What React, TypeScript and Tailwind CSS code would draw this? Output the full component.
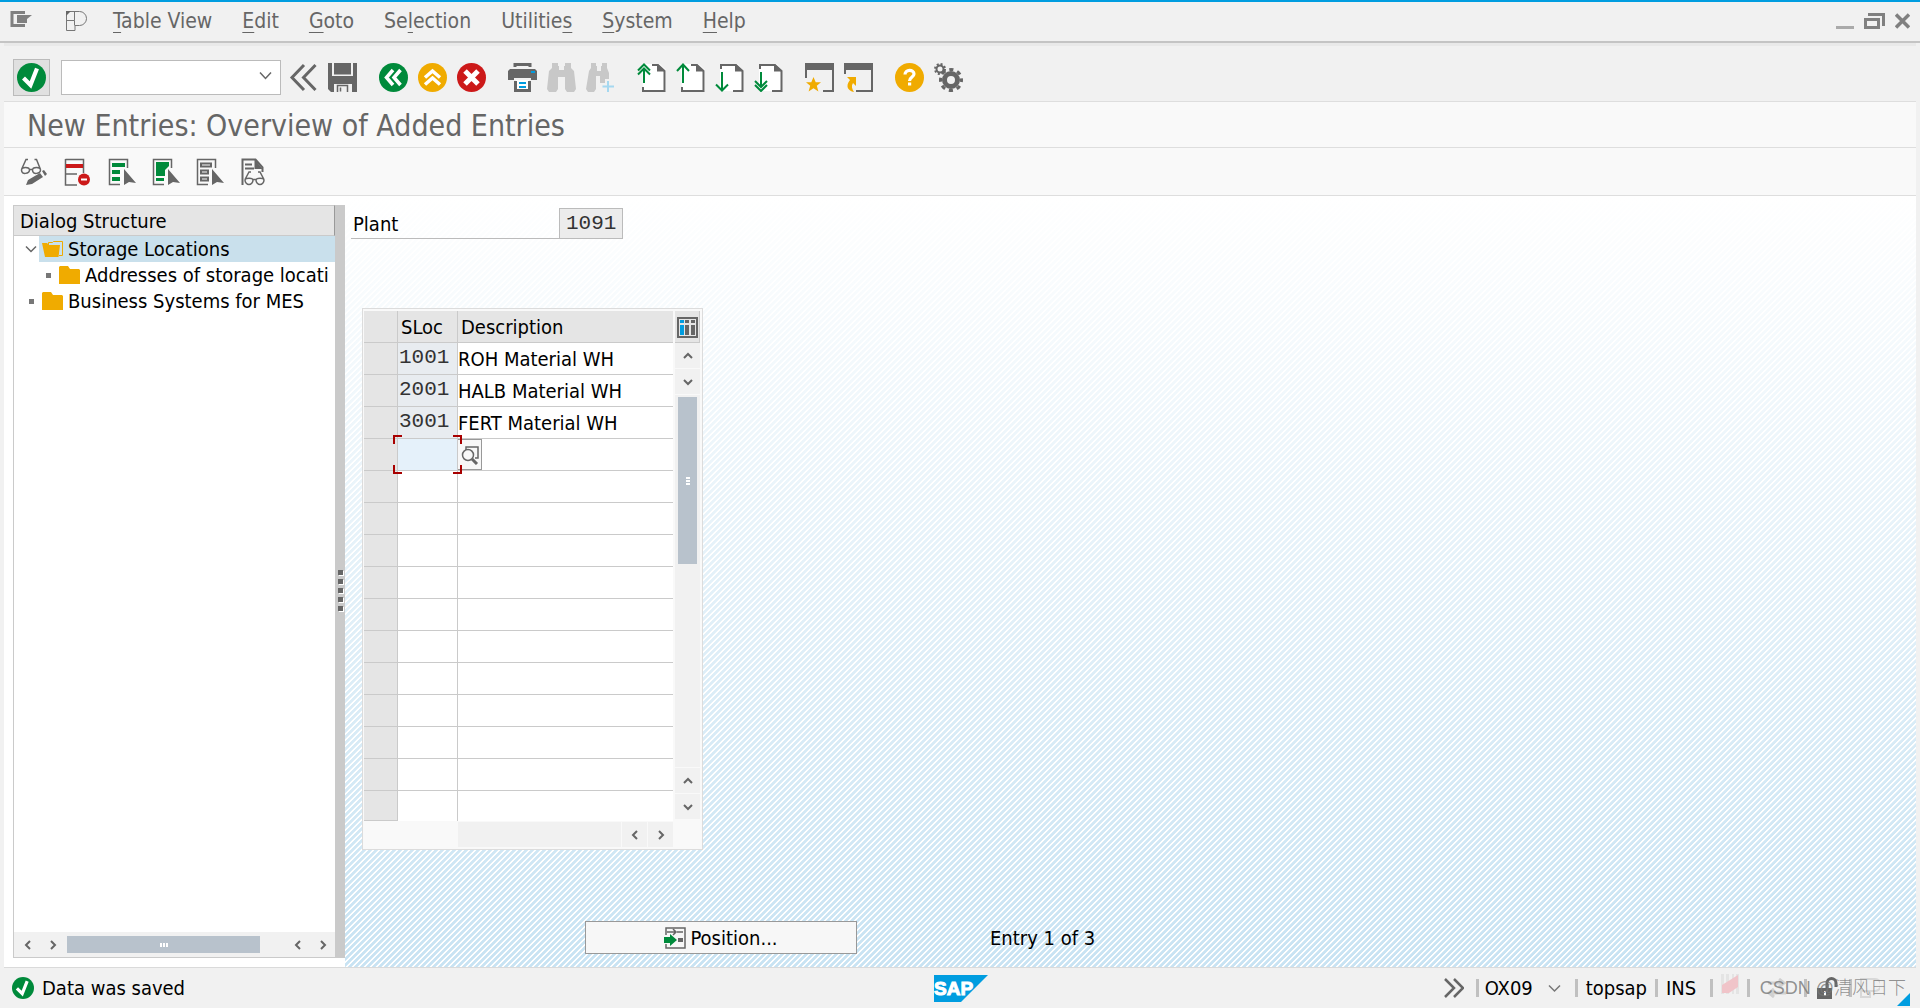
import type { ReactNode } from 'react';
import clsx from 'clsx';

const menus = [
  ['', 'T', 'able View'],
  ['', 'E', 'dit'],
  ['', 'G', 'oto'],
  ['Se', 'l', 'ection'],
  ['Utilitie', 's', ''],
  ['', 'S', 'ystem'],
  ['', 'H', 'elp'],
];

const rows = [
  { sloc: '1001', description: 'ROH Material WH' },
  { sloc: '2001', description: 'HALB Material WH' },
  { sloc: '3001', description: 'FERT Material WH' },
  ...Array.from({ length: 12 }, () => ({ sloc: '', description: '' })),
];

function Svg({ size = 29, className, children }: { size?: number; className?: string; children: ReactNode }) {
  return (
    <svg
      width={size}
      height={size}
      viewBox={`0 0 ${size} ${size}`}
      fill="none"
      className={clsx('block shrink-0', className)}
      aria-hidden="true"
    >
      {children}
    </svg>
  );
}

function IconButton({ label, children }: { label: string; children: ReactNode }) {
  return (
    <button type="button" aria-label={label} className="block shrink-0">
      {children}
    </button>
  );
}

function CheckIcon({ size = 29 }: { size?: number }) {
  return (
    <svg width={size} height={size} viewBox="0 0 29 29" fill="none" className="block shrink-0" aria-hidden="true">
      <circle cx="14.5" cy="14.5" r="14.5" fill="#008a3b" />
      <path d="M6.500 15l7 7L20 5.500" stroke="#fff" strokeWidth="4.200" />
    </svg>
  );
}

function PageIcon({ up, double }: { up?: boolean; double?: boolean }) {
  return (
    <Svg>
      <path d={up ? 'M5 1h18l6 6v21H6z' : 'M5 1h18l5 6v21H5z'} fill="#fff" />
      <path d="M20 1l8 7.500h-8z" fill="#666" />
      {up ? (
        <path d="M15 2h6l6.500 6v20H6v-4" stroke="#666" strokeWidth="2" />
      ) : (
        <path d="M6 6V2h15l6.500 6v20H18" stroke="#666" strokeWidth="2" />
      )}
      {up ? (
        <path
          d={double ? 'M7 20V6M1 11.500l6-6 6 6M1 7.500l6-6 6 6' : 'M7 20V2M1 8l6-6.500L13 8'}
          stroke="#008a3b"
          strokeWidth="2"
        />
      ) : (
        <path
          d={double ? 'M7 9v14M1 18l6 6 6-6M1 22l6 6 6-6' : 'M7 9v18M1 21.500l6 6 6-6'}
          stroke="#008a3b"
          strokeWidth="2"
        />
      )}
    </Svg>
  );
}

function ChevronIcon({ dir }: { dir: 'up' | 'down' | 'left' | 'right' }) {
  const paths = {
    up: 'M2 8l4-4 4 4',
    down: 'M2 4l4 4 4-4',
    left: 'M8 2L4 6l4 4',
    right: 'M4 2l4 4-4 4',
  };
  return (
    <Svg size={12}>
      <path d={paths[dir]} stroke="#666" strokeWidth="2" />
    </Svg>
  );
}

function ScrollButton({ dir }: { dir: 'up' | 'down' | 'left' | 'right' }) {
  return (
    <button
      type="button"
      aria-label={`Scroll ${dir}`}
      className="flex size-[25px] shrink-0 items-center justify-center bg-[#f1f1f1]"
    >
      <ChevronIcon dir={dir} />
    </button>
  );
}

function Grip({ vertical }: { vertical?: boolean }) {
  return (
    <span className={clsx('flex gap-px', vertical && 'flex-col')}>
      {[0, 1, 2].map((i) => (
        <span key={i} className={clsx('bg-white', vertical ? 'h-0.5 w-1' : 'h-1 w-0.5')} />
      ))}
    </span>
  );
}

function MenuBar() {
  return (
    <header className="flex h-[41px] items-center border-b-2 border-[#c4c4c4] pr-2.5 pb-0.5 pl-2.5">
      <IconButton label="Window menu">
        <svg width="23" height="18" viewBox="0 0 23 18" className="mb-1 block" aria-hidden="true">
          <path d="M15 2.500H2v13h13" fill="none" stroke="#808080" strokeWidth="3" />
          <path d="M7 5h15l-5 4v4H7z" fill="#808080" />
        </svg>
      </IconButton>
      <svg width="24" height="22" viewBox="0 0 24 22" fill="none" className="ml-8 block" aria-hidden="true">
        <path
          d="M1.500 1.500h13a7 7 0 0 1 0 14H10v5H1.500zM9.500 1.500v9H1.500M9.500 10.500v5"
          stroke="#777"
        />
        <path d="M1 1h5L1 6z" fill="#666" />
      </svg>
      <nav className="ml-6 flex gap-[30px] text-[21px] text-[#666]">
        {menus.map(([before, key, after]) => (
          <button key={before + key + after} type="button" className="leading-7">
            {before}
            <span className="underline decoration-1 underline-offset-4">{key}</span>
            {after}
          </button>
        ))}
      </nav>
      <div className="ml-auto flex items-center gap-2.5">
        <IconButton label="Minimize">
          <svg width="18" height="18" viewBox="0 0 18 18" className="block" aria-hidden="true">
            <path d="M0 14h18v3H0z" fill="#aaa" />
          </svg>
        </IconButton>
        <IconButton label="Restore">
          <svg width="21" height="18" viewBox="0 0 21 18" fill="none" stroke="#808080" strokeWidth="3" className="block" aria-hidden="true">
            <path d="M1.500 7.500h13v8h-13zM4 2.500h15.500V14" />
          </svg>
        </IconButton>
        <IconButton label="Close">
          <svg width="15" height="16" viewBox="0 0 15 16" stroke="#808080" strokeWidth="3.500" className="block" aria-hidden="true">
            <path d="M1 1.500l13 13M14 1.500l-13 13" />
          </svg>
        </IconButton>
      </div>
    </header>
  );
}

function StandardToolbar() {
  return (
    <div className="mx-1 flex h-[58px] items-center border-t-3 border-[#e9e9e9] pt-2.5 pb-0.5 pl-[9px]">
      <button
        type="button"
        aria-label="Enter"
        className="flex size-[37px] items-center justify-center border border-[#bbb] bg-[#e0e0e0]"
      >
        <CheckIcon />
      </button>
      <div className="ml-[11px] flex h-[35px] w-[220px] items-center border border-[#bbb] bg-white pr-2">
        <input aria-label="Command" className="h-full min-w-0 flex-1 px-1 text-xl outline-none" />
        <IconButton label="Command history">
          <Svg size={13} className="mb-1">
            <path d="M1 3.500l5.500 6 5.500-6" stroke="#666" strokeWidth="1.500" />
          </Svg>
        </IconButton>
      </div>
      <div className="ml-2 flex items-center gap-2.5">
        <IconButton label="Hide command field">
          <Svg>
            <path d="M15 2L3 14.500 15 27M26.500 2l-12 12.500 12 12.500" stroke="#666" strokeWidth="3" />
          </Svg>
        </IconButton>
        <IconButton label="Save">
          <Svg>
            <path d="M0 0h4v13h21V0h4v29h-5v-8.500H6V29H3l-3-3z" fill="#666" />
            <path d="M6 0h17v11.500H6z" fill="#666" />
            <path d="M9.500 29v-6.500h10V29M12.500 24.500v4" stroke="#666" strokeWidth="1.500" />
            <path d="M4 13h21v8H4z" fill="#666" />
          </Svg>
        </IconButton>
      </div>
      <div className="ml-[22px] flex gap-2.5">
        <IconButton label="Back">
          <Svg>
            <circle cx="14.5" cy="14.500" r="14.500" fill="#008a3b" />
            <path d="M14 7l-6.500 7.500L14 22M21.500 7L15 14.500l6.500 7.500" stroke="#fff" strokeWidth="3.500" />
          </Svg>
        </IconButton>
        <IconButton label="Exit">
          <Svg>
            <circle cx="14.500" cy="14.500" r="14.500" fill="#f0ab00" />
            <path d="M7 14.500L14.500 8l7.500 6.500M7 21.500l7.500-6.500 7.500 6.500" stroke="#fff" strokeWidth="3.500" />
          </Svg>
        </IconButton>
        <IconButton label="Cancel">
          <Svg>
            <circle cx="14.500" cy="14.500" r="14.500" fill="#cc1919" />
            <path d="M8 8l13 13M21 8L8 21" stroke="#fff" strokeWidth="5" />
          </Svg>
        </IconButton>
      </div>
      <div className="ml-[22px] flex gap-2.5">
        <IconButton label="Print">
          <Svg>
            <path d="M7 4V1.500h15V4" stroke="#666" strokeWidth="3" />
            <path d="M2 6h25l2 2v9h-6v-2H6v2H0V8z" fill="#666" />
            <path d="M23 8h4v2h-4z" fill="#009de0" />
            <path d="M8 17h13v9H8z" fill="#fff" />
            <path d="M7.500 18v9.500h14V18" stroke="#666" strokeWidth="3" />
            <path d="M11 20h7M11 24h7" stroke="#009de0" strokeWidth="2" />
          </Svg>
        </IconButton>
        <IconButton label="Find">
          <Svg>
            <path
              d="M5 0h6v3h1v4h5V3h1V0h6v5l3 3 2 18-2 3h-7l-2-3V14h-7v12l-2 3H2l-2-3L2 8l3-3z"
              fill="#c8c8c8"
            />
          </Svg>
        </IconButton>
        <IconButton label="Find next">
          <Svg>
            <path
              d="M5 0h5v3h1v5h4V3h1V0h5v5l2 5v6h-4v4h-5v-7h-4v13l-2 3H2l-2-3L3 8l2-3z"
              fill="#c8c8c8"
            />
            <path d="M22 18v11M16.500 23.500H28" stroke="#a5d8f0" strokeWidth="2" />
          </Svg>
        </IconButton>
      </div>
      <div className="ml-[22px] flex gap-2.5">
        <IconButton label="First page">
          <PageIcon up double />
        </IconButton>
        <IconButton label="Previous page">
          <PageIcon up />
        </IconButton>
        <IconButton label="Next page">
          <PageIcon />
        </IconButton>
        <IconButton label="Last page">
          <PageIcon double />
        </IconButton>
      </div>
      <div className="ml-[22px] flex gap-2.5">
        <IconButton label="Create session">
          <Svg>
            <path d="M0 0h29v29H18v-2h9V7H2v8H0z" fill="#666" />
            <path d="M8.500 14l2.200 5.200H16l-4.200 3.600 1.600 5.700-4.900-3.300-4.900 3.300 1.600-5.700L1 19.200h5.300z" fill="#f0ab00" />
          </Svg>
        </IconButton>
        <IconButton label="Generate shortcut">
          <Svg>
            <path d="M0 0h29v29H12v-2h15V7H2v4H0z" fill="#666" />
            <path d="M3 14h9v9l-3-3c-2 3-1 6 1 9-6-1-9-6-4-12z" fill="#f0ab00" />
          </Svg>
        </IconButton>
      </div>
      <div className="ml-[22px] flex gap-2.5">
        <IconButton label="Help">
          <Svg>
            <circle cx="14.500" cy="14.500" r="14.500" fill="#f0ab00" />
            <path d="M10 11.500c0-5.500 9-5.500 9-.5 0 3-4.500 3-4.500 7" stroke="#fff" strokeWidth="3.200" />
            <path d="M13 19.500h3.200v3H13z" fill="#fff" />
          </Svg>
        </IconButton>
        <IconButton label="Customize local layout">
          <Svg>
            <circle cx="17" cy="17" r="6.500" stroke="#666" strokeWidth="5" />
            <circle cx="17" cy="17" r="10.500" stroke="#666" strokeWidth="3" strokeDasharray="4.200 4.047" strokeDashoffset="2.100" />
            <circle cx="6" cy="6" r="3.500" stroke="#666" strokeWidth="2" />
            <circle cx="6" cy="6" r="5" stroke="#666" strokeWidth="2" strokeDasharray="2 1.927" />
          </Svg>
        </IconButton>
      </div>
    </div>
  );
}

function Pointer() {
  return <path d="M16 11l12 14-7-1-5 3z" fill="#666" />;
}

function FunctionBar() {
  return (
    <div className="mx-1 flex h-12 items-center gap-4 border-t border-[#dedede] bg-[#f9f9f9] px-4">
      <IconButton label="Display / change">
        <Svg size={28}>
          <path
            d="M1.500 12c0-3.500 8-3.500 8 0s-8 5.500-8 0zM12.500 12c0-3.500 8-3.500 8 0s-8 5.500-8 0zM9.500 11.500h3M1.500 11.500L6 1.500h2M20.500 11.500L16.500 1.500h-2"
            stroke="#666"
            strokeWidth="1.500"
          />
          <path d="M8 22l12-7 3 4-11 7-6 1zM22 13l2-1 3 4-2 2z" fill="#666" />
        </Svg>
      </IconButton>
      <IconButton label="Delete">
        <Svg size={28}>
          <path d="M1.500 1.500h18V15M1.500 1v26H13M2 16h11" stroke="#666" strokeWidth="1.500" />
          <path d="M2 6h17v4H2z" fill="#cc1919" />
          <circle cx="20" cy="21.500" r="6" fill="#cc1919" />
          <path d="M17 21.500h6" stroke="#fff" strokeWidth="2" />
        </Svg>
      </IconButton>
      <IconButton label="Select all">
        <Svg size={28}>
          <path d="M12 26.500H1.500v-25h18V10" stroke="#666" strokeWidth="1.500" />
          <path d="M4 5h13v4H4zM4 12h8v4H4zM4 19h8v4H4z" fill="#008a3b" />
          <Pointer />
        </Svg>
      </IconButton>
      <IconButton label="Select block">
        <Svg size={28}>
          <path d="M12 26.500H1.500v-25h18V10" stroke="#666" strokeWidth="1.500" />
          <path d="M4 4h13v4l-4 4v6H4zM4 20h8v3H4z" fill="#008a3b" />
          <Pointer />
        </Svg>
      </IconButton>
      <IconButton label="Deselect all">
        <Svg size={28}>
          <path d="M12 26.500H1.500v-25h18V10" stroke="#666" strokeWidth="1.500" />
          <path d="M5 5.500h10v3H5zM5 12.500h7v3H5zM5 19.500h7v3H5z" stroke="#666" strokeWidth="2" />
          <Pointer />
        </Svg>
      </IconButton>
      <IconButton label="Print preview">
        <Svg size={28}>
          <path d="M2.500 27V1.500h13l7 8V14M5 6.500h7M5 10.500h9" stroke="#666" strokeWidth="2" />
          <path d="M14.500 1l8 10h-8z" fill="#666" />
          <path
            d="M5 22c0-2.500 8-2.500 8 0s-2 4.500-4 4.500-4-2-4-4.500zM16 22c0-2.500 8-2.500 8 0s-2 4.500-4 4.500-4-2-4-4.500zM13 21.500h3M5 21.500l4-7.500h2M24 21.500L20 14h-2"
            stroke="#666"
            strokeWidth="1.500"
          />
        </Svg>
      </IconButton>
    </div>
  );
}

function Folder({ open }: { open?: boolean }) {
  return (
    <svg width="21" height="18" viewBox="0 0 21 18" className="mr-[5px] block shrink-0" aria-hidden="true">
      {open ? (
        <>
          <path d="M6.500 5V2.500h4l1-1h9v14H17" fill="none" stroke="#f0ab00" />
          <path d="M0 3h5l2 2h11l-1.500 12H3z" fill="#f0ab00" />
        </>
      ) : (
        <path d="M0 1l1-1h8l2 3h9l1 1v14H0z" fill="#f0ab00" />
      )}
    </svg>
  );
}

function Bullet() {
  return <span className="size-[5px] shrink-0 bg-[#777]" />;
}

function DialogStructure() {
  return (
    <aside className="mt-[9px] mb-[9px] ml-[9px] flex w-[332px] shrink-0 border-b border-[#cacaca]">
      <div className="flex min-w-0 flex-1 flex-col border-l border-[#cacaca]">
        <h2 className="h-[31px] border-y border-r border-y-[#cacaca] border-r-[#999] bg-[#e5e5e5] pl-1.5 text-xl leading-[30px]">
          Dialog Structure
        </h2>
        <ul className="flex-1 overflow-hidden text-xl leading-[26px] whitespace-nowrap">
          <li className="flex items-center pl-[11px]">
            <button type="button" aria-label="Collapse" className="mr-0.5">
              <Svg size={12}>
                <path d="M1 3.500l5 5 5-5" stroke="#666" strokeWidth="1.500" />
              </Svg>
            </button>
            <a href="#storage" className="flex flex-1 items-center bg-[#c9e0ec] pl-[3px]">
              <Folder open />
              Storage Locations
            </a>
          </li>
          <li className="flex items-center gap-2 pl-8">
            <Bullet />
            <a href="#addresses" className="flex items-center">
              <Folder />
              Addresses of storage locati
            </a>
          </li>
          <li className="flex items-center gap-2 pl-[15px]">
            <Bullet />
            <a href="#mes" className="flex items-center">
              <Folder />
              Business Systems for MES
            </a>
          </li>
        </ul>
        <div className="flex h-[25px] items-center bg-[#f1f1f1] pl-px">
          <ScrollButton dir="left" />
          <ScrollButton dir="right" />
          <div className="ml-0.5 flex h-[17px] flex-1 items-center justify-center bg-[#b8c2cc]">
            <Grip />
          </div>
          <div className="ml-[25px] flex">
            <ScrollButton dir="left" />
            <ScrollButton dir="right" />
          </div>
        </div>
      </div>
      <div className="flex w-2.5 flex-col items-center justify-center gap-1 bg-[#cacaca] pt-[18px]">
        {[0, 1, 2, 3, 4].map((i) => (
          <span key={i} className="size-[5px] bg-[#666] shadow-[1px_1px_0_#fff]" />
        ))}
      </div>
    </aside>
  );
}

function CursorFrame() {
  const corner = 'absolute size-[9px] border-[#a80000]';
  return (
    <span className="pointer-events-none absolute -inset-x-[5px] -inset-y-1 z-10">
      <span className={clsx(corner, 'top-0 left-0 border-t-2 border-l-2')} />
      <span className={clsx(corner, 'top-0 right-0 border-t-2 border-r-2')} />
      <span className={clsx(corner, 'bottom-0 left-0 border-b-2 border-l-2')} />
      <span className={clsx(corner, 'right-0 bottom-0 border-r-2 border-b-2')} />
    </span>
  );
}

function EntriesTable() {
  const line = 'border-r border-b border-[#cacaca]';
  return (
    <div className="ml-[11px] flex w-fit gap-0.5 border border-[#dcdcdc] bg-[#f9f9f9] pt-0.5 pr-0.5 pb-0.5 pl-px">
      <div>
        <table className="w-[309px] table-fixed border-separate border-spacing-0 text-xl">
          <thead className="bg-[#e5e5e5] text-left">
            <tr className="h-8">
              <th className={clsx(line, 'w-[34px] p-0')} aria-label="Select" />
              <th className={clsx(line, 'w-[60px] p-0 pl-[3px] font-normal')}>SLoc</th>
              <th className="border-b border-[#cacaca] p-0 pl-[3px] font-normal">Description</th>
            </tr>
          </thead>
          <tbody>
            {rows.map((row, i) => {
              const last = i === rows.length - 1;
              const current = i === 3;
              return (
                <tr key={i} className={last ? 'h-[30px]' : 'h-8'}>
                  <td className={clsx(line, 'bg-[#e5e5e5] p-0')} />
                  <td
                    className={clsx(
                      'relative border-r border-[#cacaca] p-0',
                      !last && 'border-b',
                      row.sloc ? 'bg-[#e8ecf0]' : current ? 'bg-[#e5f1fa]' : 'bg-white'
                    )}
                  >
                    <input
                      aria-label={`SLoc ${i + 1}`}
                      defaultValue={row.sloc}
                      readOnly={!!row.sloc}
                      className="block w-full bg-transparent pb-0.5 pl-px font-['Liberation_Mono',monospace] text-[21px] leading-6 text-[#333] outline-none"
                    />
                    {current && <CursorFrame />}
                  </td>
                  <td className={clsx('border-[#cacaca] bg-white p-0', !last && 'border-b')}>
                    <div className="flex items-center">
                      {current && (
                        <button
                          type="button"
                          aria-label="Search help"
                          className="-my-1 flex h-[31px] w-6 shrink-0 items-center justify-center border border-l-0 border-[#999] bg-[#f7f7f7]"
                        >
                          <Svg size={20}>
                            <path d="M6 5V2h12v11h-3" stroke="#666" strokeWidth="1.500" />
                            <circle cx="8" cy="10" r="5.500" stroke="#666" strokeWidth="1.500" />
                            <path d="M12 14l5 5" stroke="#666" strokeWidth="3" />
                          </Svg>
                        </button>
                      )}
                      <input
                        aria-label={`Description ${i + 1}`}
                        defaultValue={row.description}
                        className="block w-full min-w-0 bg-transparent leading-6 outline-none"
                      />
                    </div>
                  </td>
                </tr>
              );
            })}
          </tbody>
        </table>
        <div className="mt-px ml-[94px] flex gap-px">
          <div className="flex-1 bg-[#f1f1f1]" />
          <ScrollButton dir="left" />
          <ScrollButton dir="right" />
        </div>
      </div>
      <div className="flex flex-col gap-px pb-7">
        <button
          type="button"
          aria-label="Table settings"
          className="-mb-px flex h-8 items-center justify-center border-r border-b border-[#cacaca] bg-[#e5e5e5] pt-0.5"
        >
          <Svg size={21}>
            <path d="M1 1h19v19H1z" fill="#e5e5e5" stroke="#666" strokeWidth="2" />
            <path d="M3 3h4v3H3zM3 8h4v10H3z" fill="#009de0" />
            <path d="M8 3h4v3H8zM8 8h4v10H8zM14 3h4v3h-4zM14 8h4v10h-4z" fill="#666" />
          </Svg>
        </button>
        <ScrollButton dir="up" />
        <ScrollButton dir="down" />
        <div className="flex flex-1 flex-col bg-[#f1f1f1] px-[3px] pt-0.5">
          <div className="flex h-[167px] items-center justify-center bg-[#b8c2cc]">
            <Grip vertical />
          </div>
        </div>
        <ScrollButton dir="up" />
        <ScrollButton dir="down" />
      </div>
    </div>
  );
}

function WorkArea() {
  return (
    <main className="flex-1 bg-[linear-gradient(to_bottom,#fff,rgba(255,255,255,0)),repeating-linear-gradient(135deg,#c8e3f3_0,#c8e3f3_2px,#fff_2.500px,#fff_3.700px,#c8e3f3_4.243px)] pt-3 pb-3 pl-1.5">
      <div className="flex h-[31px]">
        <label htmlFor="plant" className="w-52 border-b border-[#bbb] pl-0.5 text-xl leading-8">
          Plant
        </label>
        <input
          id="plant"
          readOnly
          defaultValue="1091"
          className="w-16 border border-[#bbb] bg-[#ececec] pl-1.5 font-['Liberation_Mono',monospace] text-[21px] text-[#333] outline-none"
        />
      </div>
      <div className="h-[69px]" />
      <EntriesTable />
      <div className="mt-[71px] ml-[234px] flex items-center text-xl">
        <button
          type="button"
          className="flex h-[33px] w-[272px] items-center justify-center gap-1 border border-[#999] bg-[#f7f7f7]"
        >
          <Svg size={22}>
            <path d="M2 8V1h19v20H2v-4" stroke="#666" strokeWidth="1.500" />
            <path d="M3 5h8M13 5h6M9 2l3 3-3 3" stroke="#666" strokeWidth="1.500" />
            <path d="M0 10h6V7l7 6-7 6v-3H0z" fill="#008a3b" />
            <path d="M14 11h5v4h-5z" fill="#666" />
          </Svg>
          Position...
        </button>
        <span className="ml-[133px]">Entry 1 of 3</span>
      </div>
    </main>
  );
}

function Separator() {
  return <span className="h-[18px] w-[3px] shrink-0 bg-[#c0c0c0]" />;
}

function StatusBar() {
  return (
    <footer className="mx-1 flex h-[41px] items-center border-t border-[#dadada] pr-1.5 pl-2 text-xl">
      <div className="flex flex-1 items-center gap-2">
        <CheckIcon size={22} />
        <span>Data was saved</span>
      </div>
      <svg width="54" height="27" viewBox="0 0 54 27" role="img" aria-label="SAP" className="block">
        <path d="M0 0h54L27 27H0z" fill="#009de0" />
        <text
          x="0"
          y="20"
          fill="#fff"
          stroke="#fff"
          strokeWidth="1"
          fontFamily="Liberation Sans, sans-serif"
          fontWeight="700"
          fontSize="19"
        >
          SAP
        </text>
      </svg>
      <div className="relative flex flex-1 items-center justify-end">
        <IconButton label="Expand status">
          <Svg size={20}>
            <path d="M1 1l9 9-9 9M10 1l9 9-9 9" stroke="#666" strokeWidth="2.500" />
          </Svg>
        </IconButton>
        <span className="w-3" />
        <Separator />
        <div className="ml-1.5 flex items-center">
          <select aria-label="System information" className="w-[63px] appearance-none bg-transparent outline-none">
            <option>OX09</option>
          </select>
          <Svg size={13}>
            <path d="M1 3.500l5.500 5.500L12 3.500" stroke="#777" strokeWidth="1.500" />
          </Svg>
        </div>
        <span className="w-3.5" />
        <Separator />
        <span className="mx-2">topsap</span>
        <Separator />
        <span className="mx-2 w-9">INS</span>
        <Separator />
        <svg width="18" height="20" viewBox="0 0 18 20" className="mx-2 mb-2 block" aria-hidden="true">
          <path d="M0 0h3v20H0zM5 0h3v20H5zM11 0h2v20h-2zM15 0h3v20h-3z" fill="#e4e4e4" />
          <path d="M1 19V11L17 1v12L8 19z" fill="#f0c4c9" />
        </svg>
        <Separator />
        <svg width="22" height="20" viewBox="0 0 22 20" fill="none" stroke="#d0d0d0" strokeWidth="3" className="ml-4 block" aria-hidden="true">
          <path d="M2 5h15M13 1l5 4-5 4M20 15H4M8 11l-5 4 5 4" />
        </svg>
        <span className="w-4" />
        <Separator />
        <svg width="22" height="22" viewBox="0 0 22 22" className="mx-2.5 block" aria-hidden="true">
          <path d="M0 11h15v11H0z" fill="#666" />
          <path d="M10 11V6a4.500 4.500 0 0 1 9 0v4" fill="none" stroke="#666" strokeWidth="3" />
          <path d="M7 14h2v5H7z" fill="#fff" />
        </svg>
        <Separator />
        <svg width="20" height="20" viewBox="0 0 20 20" fill="none" stroke="#d8d8d8" strokeWidth="2" className="mr-[30px] ml-2 block" aria-hidden="true">
          <path d="M1 1h14a4 4 0 0 1 0 12H1zM1 13v6h9v-6" />
        </svg>
        <span className="absolute right-1 text-lg font-light whitespace-nowrap text-[#777]/80 [font-family:'Liberation_Sans','Noto_Sans_CJK_SC',sans-serif]">
          CSDN @清风日下
        </span>
        <svg width="13" height="13" viewBox="0 0 13 13" className="absolute right-0 -bottom-1 block" aria-hidden="true">
          <path d="M13 0v13H0z" fill="#009de0" />
        </svg>
      </div>
    </footer>
  );
}

export default function App() {
  return (
    <div className="flex min-h-screen flex-col border-t-2 border-[#009de0] bg-[#f1f1f1] text-black [font-family:'DejaVu_Sans_Condensed','Noto_Sans_CJK_SC',sans-serif]">
      <MenuBar />
      <StandardToolbar />
      <h1 className="mx-1 h-[46px] border-t border-[#dedede] bg-[#f9f9f9] pl-[23px] text-3xl leading-[48px] text-[#666]">
        New Entries: Overview of Added Entries
      </h1>
      <FunctionBar />
      <div className="mx-1 flex flex-1 border-t border-[#dedede] bg-white">
        <DialogStructure />
        <WorkArea />
      </div>
      <StatusBar />
    </div>
  );
}
